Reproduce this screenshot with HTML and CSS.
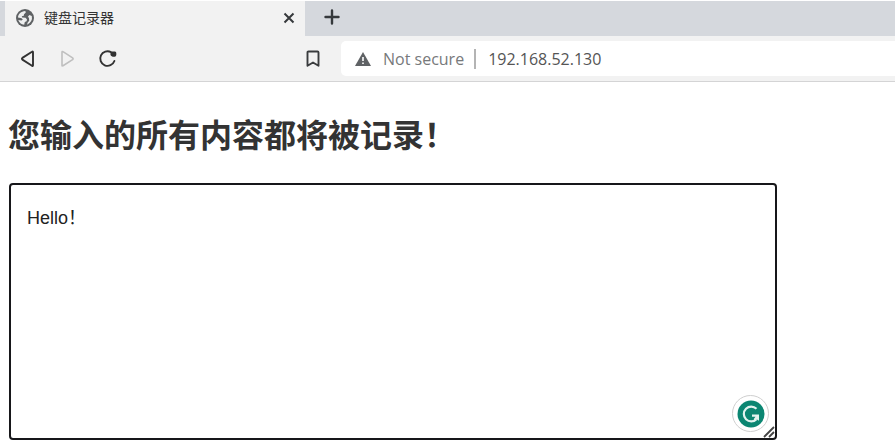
FILE: index.html
```html
<!doctype html>
<html lang="zh-CN">
  <head>
    <meta charset="utf-8">
    <meta name="viewport" content="width=device-width, initial-scale=1">
    <title>键盘记录器</title>
    <link rel="stylesheet" href="styles.css">
  </head>
  <body>
    <header class="browser">
      <div class="tab-bar">
        <div class="tab">
          <svg class="globe" width="18" height="18" viewBox="0 0 18 18" aria-hidden="true">
            <circle cx="9" cy="9" r="9" fill="#5f6264"/>
            <path d="M2 8.500C2.200 5 5 2.400 9.300 2.100L9.800 3.600 8 5.200 7.800 6.800 5.800 7.300 6.200 8.600 9.600 8.800 11 10.400 10.600 12.200 8.800 13 8.200 15.800C5 15.400 3.200 13.800 2.300 11L5.500 11.500 6.800 10.600 5.600 9.200z" fill="#eeefef"/>
            <path d="M12 7.400l1.400-1.300 2.400.8q.6 2.800-.6 5.200-1.500 2.700-4.200 3.600l.7-2.200 1.500-1.700-.2-2.600z" fill="#eeefef"/>
          </svg>
          <span class="tab-title">键盘记录器</span>
          <button class="icon-button" type="button" aria-label="Close tab">
            <svg width="12" height="12" viewBox="0 0 12 12"><path d="M1.500 1.500l9 9M10.500 1.500l-9 9" stroke="#36393c" stroke-width="2"/></svg>
          </button>
        </div>
        <button class="icon-button new-tab" type="button" aria-label="New tab">
          <svg width="16" height="16" viewBox="0 0 16 16"><path d="M8 1.500v13M1.500 8h13" stroke="#36393c" stroke-width="2.400" stroke-linecap="round"/></svg>
        </button>
      </div>
      <div class="toolbar">
        <div class="nav">
          <button class="icon-button" type="button" aria-label="Back">
            <svg width="20" height="20" viewBox="0 0 20 20"><path d="M15 3.200v13q0 1.300-1 .5L4.400 10.600q-1-.9 0-1.700L14 2.700q1-.7 1 .5z" fill="none" stroke="#333" stroke-width="1.900" stroke-linejoin="round"/></svg>
          </button>
          <button class="icon-button" type="button" aria-label="Forward" disabled>
            <svg width="20" height="20" viewBox="0 0 20 20"><path d="M4 3.200v13q0 1.300 1 .5l9.600-6.100q1-.9 0-1.700L5 2.700q-1-.7-1 .5z" fill="none" stroke="#bfbfbf" stroke-width="1.600" stroke-linejoin="round"/></svg>
          </button>
          <button class="icon-button" type="button" aria-label="Reload">
            <svg width="20" height="20" viewBox="0 0 20 20"><path d="M16.400 12A7.300 7.300 0 1 1 13 3.100" fill="none" stroke="#333" stroke-width="1.900" stroke-linecap="round"/><path d="M14 2.500h3q1.200.2 1.300 1.400v2.200q-.2 1.500-1.600 1.600h-2q-2.400-.3-2.400-2.600.1-2 1.700-2.600z" fill="#333"/></svg>
          </button>
        </div>
        <button class="icon-button bookmark" type="button" aria-label="Bookmark this page">
          <svg width="14" height="18" viewBox="0 0 14 18"><path d="M1.500 2.500q0-1 1-1h9q1 0 1 1v13.300L7 12.500l-5.500 3.300z" fill="none" stroke="#3a3c3e" stroke-width="1.900" stroke-linejoin="round"/></svg>
        </button>
        <div class="address">
          <svg width="16" height="14" viewBox="0 0 16 14" aria-hidden="true"><path d="M8 0l8 14H0z" fill="#5f6265"/><path d="M7.200 5h1.600v4H7.200zM7.200 10.400h1.600V12H7.200z" fill="#fff"/></svg>
          <label class="security" for="url">Not secure</label>
          <input class="url" id="url" type="text" value="192.168.52.130">
        </div>
      </div>
    </header>
    <main>
      <h1><label for="content">您输入的所有内容都将被记录！</label></h1>
      <div class="editor">
        <textarea id="content" spellcheck="false">Hello！</textarea>
        <button class="assistant" type="button" aria-label="Writing assistant">
          <svg width="28" height="28" viewBox="0 0 28 28"><circle cx="14" cy="14" r="13.500" fill="#0b8672"/><path d="M19.500 8.800A7.400 7.400 0 1 0 19.500 19.200" fill="none" stroke="#e2f3ef" stroke-width="2.200"/><path d="M15 14.500h7v6.300l-2.400-1.600-1.800 1.500-1.200-1.400 1.900-2.500H15z" fill="#e2f3ef"/></svg>
        </button>
        <svg class="grip" width="12" height="12" viewBox="0 0 12 12" aria-hidden="true"><path d="M1 11L11 1M6 11l5-5" stroke="#444" stroke-width="1.800"/></svg>
      </div>
    </main>
  </body>
</html>
```

FILE: styles.css
```css
* {
  box-sizing: border-box;
}

body {
  margin: 0;
  background: #fff;
  color: #333;
  font-family: "Liberation Sans", "Noto Sans CJK SC", sans-serif;
}

.browser {
  background: #f2f2f2;
  border-top: 1px solid #fff;
  border-bottom: 1px solid #d4d4d5;
}

.tab-bar {
  display: flex;
  height: 35px;
  padding-left: 5px;
  background: #d5d8dd;
}

.tab {
  display: flex;
  align-items: center;
  width: 300px;
  padding: 0 8px 2px 11px;
  background: #f2f2f2;
}

.tab-title {
  flex: 1;
  margin-left: 10px;
  font-size: 14px;
  line-height: 20px;
}

.icon-button {
  display: flex;
  align-items: center;
  justify-content: center;
  width: 16px;
  height: 100%;
  padding: 0;
  border: 0;
  background: none;
}

.new-tab {
  height: 32px;
  margin-left: 19px;
}

.toolbar {
  display: flex;
  align-items: center;
  height: 45px;
  padding-left: 18px;
}

.nav {
  display: flex;
  gap: 20px;
}

.nav .icon-button {
  width: 20px;
}

.bookmark {
  margin-left: 187px;
}

.address {
  display: flex;
  flex: 1;
  align-items: center;
  height: 35px;
  min-width: 0;
  margin-left: 20px;
  padding-left: 14px;
  border-radius: 5px 0 0 5px;
  background: #fff;
  font-family: "Open Sans", sans-serif;
  font-size: 16px;
}

.security {
  margin-left: 12px;
  padding-right: 10px;
  border-right: 2px solid #b4b4b4;
  color: #77797b;
  line-height: 20px;
  white-space: nowrap;
}

.url {
  flex: 1;
  min-width: 0;
  padding: 0 0 0 12px;
  border: 0;
  outline: 0;
  background: none;
  color: #555;
  font: inherit;
}

main {
  padding: 27px 8px 6px;
}

h1 {
  margin: 0 0 26px;
  font-family: "Noto Sans CJK SC", sans-serif;
  font-size: 32px;
  line-height: 48px;
}

.editor {
  position: relative;
  width: 768px;
  max-width: 100%;
  margin-left: 1px;
}

textarea {
  display: block;
  width: 100%;
  height: 257px;
  padding: 19px 16px;
  border: 2px solid #17171a;
  border-radius: 4px;
  outline: 0;
  resize: none;
  background: #fff;
  color: #222;
  font-family: "Liberation Sans", "Noto Sans CJK SC", sans-serif;
  font-size: 18px;
  line-height: 28px;
}

.assistant {
  position: absolute;
  right: 8px;
  bottom: 8px;
  display: flex;
  align-items: center;
  justify-content: center;
  width: 37px;
  height: 37px;
  padding: 0;
  border: 1px solid #cfcfcf;
  border-radius: 50%;
  background: #fff;
}

.grip {
  position: absolute;
  right: 2px;
  bottom: 2px;
}
```
